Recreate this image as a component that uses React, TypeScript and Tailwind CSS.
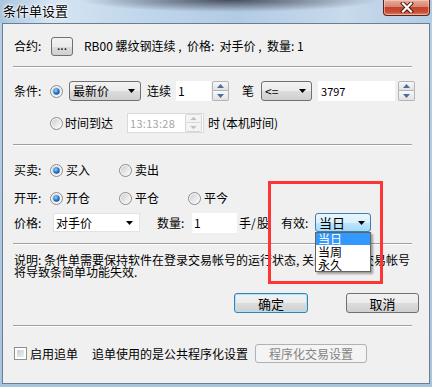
import React from "react";

const H = ({ children }: { children: React.ReactNode }) => (
  <span className="inline-block w-[6px]">{children}</span>
);

function Radio({ checked }: { checked?: boolean }) {
  return (
    <svg width="13" height="13" viewBox="0 0 13 13" className="shrink-0 block">
      <defs>
        <linearGradient id="rbg" x1="0" y1="0" x2="1" y2="1">
          <stop offset="0" stopColor="#cfcfcf" />
          <stop offset="1" stopColor="#fbfbfb" />
        </linearGradient>
        <radialGradient id="rdot" cx="0.4" cy="0.35" r="0.75">
          <stop offset="0" stopColor="#8fdcff" />
          <stop offset="0.55" stopColor="#2178c9" />
          <stop offset="1" stopColor="#0b4a88" />
        </radialGradient>
      </defs>
      <circle cx="6.5" cy="6.5" r="6" fill="#f6f6f6" stroke="#8a8a8a" />
      <circle cx="6.5" cy="6.5" r="4.5" fill="url(#rbg)" />
      {checked && <circle cx="6.5" cy="6.5" r="3.2" fill="url(#rdot)" />}
    </svg>
  );
}

function Arrow() {
  return (
    <svg width="7" height="4" viewBox="0 0 7 4" className="block shrink-0">
      <path d="M0 0h7L3.5 4z" fill="#000" />
    </svg>
  );
}

function Spin({ disabled }: { disabled?: boolean }) {
  const c = disabled ? "#c2c2c2" : "#4d6b9e";
  return (
    <div className="flex flex-col w-[17px] h-[20px] shrink-0">
      <div
        className={
          disabled
            ? "h-[10px] border border-[#d6d6d6] rounded-t-[2px] bg-[#f4f4f4] flex items-center justify-center"
            : "h-[10px] border border-[#b4b4b4] rounded-t-[2px] bg-[linear-gradient(to_bottom,#f8f8f8,#e2e2e2)] flex items-center justify-center"
        }
      >
        <svg width="7" height="4" viewBox="0 0 7 4" className="block">
          <path d="M3.5 0L7 4H0z" fill={c} />
        </svg>
      </div>
      <div
        className={
          disabled
            ? "h-[10px] border border-t-0 border-[#d6d6d6] rounded-b-[2px] bg-[#f4f4f4] flex items-center justify-center"
            : "h-[10px] border border-t-0 border-[#b4b4b4] rounded-b-[2px] bg-[linear-gradient(to_bottom,#f8f8f8,#e2e2e2)] flex items-center justify-center"
        }
      >
        <svg width="7" height="4" viewBox="0 0 7 4" className="block">
          <path d="M0 0h7L3.5 4z" fill={c} />
        </svg>
      </div>
    </div>
  );
}

function GrayCombo({ text, w }: { text: string; w: string }) {
  return (
    <div
      className={
        w +
        " h-[20px] shrink-0 rounded-[3px] border border-[#707070] bg-[linear-gradient(to_bottom,#f2f2f2_0%,#ebebeb_50%,#dddddd_51%,#cfcfcf_100%)] flex items-center pl-[3px] pr-[5px]"
      }
    >
      <span className="flex-1 leading-[12px]">{text}</span>
      <Arrow />
    </div>
  );
}

function Sep({ mt }: { mt: string }) {
  return (
    <div
      className={
        mt + " -ml-[1px] w-[399px] h-[2px] border-t border-t-[#a0a0a0] border-b border-b-white shrink-0"
      }
    />
  );
}

export default function App() {
  return (
    <div className="w-[432px] h-[387px] flex flex-col bg-[linear-gradient(to_bottom,#b8cfe6,#a9c4df)] font-['Noto_Sans_CJK_SC','Noto_Sans_CJK_JP',sans-serif] text-[12px] text-black overflow-hidden">
      {/* Title bar */}
      <div className="h-[23px] shrink-0 flex items-start bg-[radial-gradient(ellipse_150px_12px_at_230px_0px,rgba(25,25,35,0.7),rgba(25,25,35,0)),linear-gradient(to_right,#a9c5df,#d6e5f3_12%,#c3d8ec_30%,#b2cbe4_55%,#c8daec_80%,#b3cbe4)]">
        <div className="ml-[3px] mt-[4px] text-[13px] leading-[14px] text-black [text-shadow:0_0_5px_#fff,0_0_3px_#fff,0_0_2px_#fff]">
          条件单设置
        </div>
        <div className="ml-auto mr-[2px] w-[47px] h-[16px] rounded-b-[4px] border border-t-0 border-[#5e2318] bg-[linear-gradient(to_bottom,#e9ab9b,#d98470_45%,#c4432c_50%,#c74e37_80%,#e0876d)] shadow-[inset_0_0_0_1px_rgba(255,220,210,0.5)] flex items-center justify-center">
          <svg width="14" height="11" viewBox="0 0 14 11" className="block">
            <path d="M3 1.5L11 9.5M11 1.5L3 9.5" stroke="#4a1409" strokeWidth="4" strokeLinecap="square" />
            <path d="M3 1.5L11 9.5M11 1.5L3 9.5" stroke="#fff" strokeWidth="2.2" strokeLinecap="square" />
          </svg>
        </div>
      </div>

      {/* Client area */}
      <div className="mx-[2px] h-[361px] shrink-0 border border-[#6c7e91] bg-[#f0f0f0] relative flex flex-col pl-[11px]">
        {/* Row 1 */}
        <div className="mt-[12px] h-[20px] flex items-center shrink-0">
          <div className="w-[37px] shrink-0 leading-[12px]">
            合约<H>:</H>
          </div>
          <div className="w-[22px] h-[19px] shrink-0 rounded-[3px] border border-[#707070] bg-[linear-gradient(to_bottom,#f2f2f2_0%,#ebebeb_50%,#dddddd_51%,#cfcfcf_100%)] flex items-center justify-center leading-[10px] pb-[2px]">
            ...
          </div>
          <div className="ml-[11px] leading-[12px] whitespace-nowrap">
            RB00 螺纹钢连续 <H>,</H> 价格<H>:</H> 对手价 <H>,</H> 数量<H>:</H>1
          </div>
        </div>

        <Sep mt="mt-[10px]" />

        {/* Condition row */}
        <div className="mt-[13px] h-[20px] flex items-center shrink-0">
          <div className="w-[36px] shrink-0 leading-[12px]">
            条件<H>:</H>
          </div>
          <Radio checked />
          <div className="ml-[6px]">
            <GrayCombo text="最新价" w="w-[72px]" />
          </div>
          <div className="ml-[6px] leading-[12px]">连续</div>
          <div className="ml-[5px] w-[35px] h-[20px] bg-white shrink-0 flex items-center pl-[2px] leading-[12px]">1</div>
          <div className="ml-[1px]">
            <Spin />
          </div>
          <div className="ml-[13px] leading-[12px]">笔</div>
          <div className="ml-[7px]">
            <GrayCombo text="<=" w="w-[51px]" />
          </div>
          <div className="ml-[6px] w-[77px] h-[20px] bg-white shrink-0 flex items-center pl-[3px] text-[11px] leading-[12px]">3797</div>
          <div className="ml-[3px]">
            <Spin />
          </div>
        </div>

        {/* Time row */}
        <div className="mt-[12px] h-[20px] flex items-center shrink-0">
          <div className="w-[36px] shrink-0" />
          <Radio />
          <div className="ml-[2px] leading-[12px]">时间到达</div>
          <div className="ml-[14px] w-[77px] h-[20px] shrink-0 bg-white border border-[#dadada] flex items-center pl-[2px] pr-[1px]">
            <span className="flex-1 text-[#a6a6a6] text-[11px] leading-[12px] tracking-[0.3px]">13:13:28</span>
            <div className="scale-y-[0.9]">
              <Spin disabled />
            </div>
          </div>
          <div className="ml-[4px] leading-[12px]">时</div>
          <div className="ml-[2px] leading-[12px]">(本机时间)</div>
        </div>

        <Sep mt="mt-[11px]" />

        {/* Buy/Sell */}
        <div className="mt-[16px] h-[16px] flex items-center shrink-0">
          <div className="w-[36px] shrink-0 leading-[12px]">
            买卖<H>:</H>
          </div>
          <Radio checked />
          <div className="ml-[3px] w-[24px] leading-[12px]">买入</div>
          <div className="ml-[29px]">
            <Radio />
          </div>
          <div className="ml-[3px] leading-[12px]">卖出</div>
        </div>

        {/* Open/Close */}
        <div className="mt-[12px] h-[16px] flex items-center shrink-0">
          <div className="w-[36px] shrink-0 leading-[12px]">
            开平<H>:</H>
          </div>
          <Radio checked />
          <div className="ml-[3px] w-[24px] leading-[12px]">开仓</div>
          <div className="ml-[29px]">
            <Radio />
          </div>
          <div className="ml-[3px] w-[24px] leading-[12px]">平仓</div>
          <div className="ml-[29px]">
            <Radio />
          </div>
          <div className="ml-[3px] leading-[12px]">平今</div>
        </div>

        {/* Price row */}
        <div className="mt-[7px] h-[20px] flex items-start shrink-0">
          <div className="w-[39px] h-[19px] shrink-0 leading-[12px] flex items-center">
            价格<H>:</H>
          </div>
          <div className="w-[87px] h-[19px] shrink-0 bg-white border border-[#e2e3ea] flex items-center pl-[2px] pr-[6px]">
            <span className="flex-1 leading-[12px]">对手价</span>
            <Arrow />
          </div>
          <div className="ml-[17px] h-[19px] flex items-center leading-[12px]">
            数量<H>:</H>
          </div>
          <div className="ml-[5px] w-[45px] h-[20px] bg-white shrink-0 flex items-center pl-[2px] leading-[12px]">1</div>
          <div className="ml-[2px] h-[19px] flex items-center leading-[12px] whitespace-nowrap">
            手<H>/</H>股
          </div>
          <div className="ml-[12px] h-[19px] flex items-center leading-[12px] whitespace-nowrap">
            有效<H>:</H>
          </div>
          <div className="ml-[4px] w-[56px] h-[19px] shrink-0 rounded-[3px] border border-[#3c7fb1] bg-[linear-gradient(to_bottom,#eaf6fd_0%,#d9f0fc_50%,#bee6fd_51%,#a7d9f5_100%)] flex items-center pl-[3px] pr-[5px]">
            <span className="flex-1 text-[13px] leading-[13px]">当日</span>
            <Arrow />
          </div>
        </div>

        <Sep mt="mt-[10px]" />

        {/* Description */}
        <div className="mt-[9px] h-[24px] shrink-0 leading-[12px] whitespace-nowrap">
          <div>
            说明<H>:</H>条件单需要保持软件在登录交易帐号的运行状态<H>,</H>关闭程序或交易帐号
          </div>
          <div>
            将导致条简单功能失效<H>.</H>
          </div>
        </div>

        {/* Buttons */}
        <div className="mt-[15px] h-[20px] flex items-center shrink-0">
          <div className="ml-[220px] w-[74px] h-[20px] shrink-0 rounded-[3px] border border-[#3c7fb1] shadow-[inset_0_0_0_1px_#a8e4fb] bg-[linear-gradient(to_bottom,#f2f2f2_0%,#ebebeb_50%,#dddddd_51%,#cfcfcf_100%)] flex items-center justify-center text-[13px] leading-[13px]">
            确定
          </div>
          <div className="ml-[38px] w-[73px] h-[20px] shrink-0 rounded-[3px] border border-[#707070] bg-[linear-gradient(to_bottom,#f2f2f2_0%,#ebebeb_50%,#dddddd_51%,#cfcfcf_100%)] flex items-center justify-center text-[13px] leading-[13px]">
            取消
          </div>
        </div>

        <Sep mt="mt-[12px]" />

        {/* Bottom row */}
        <div className="mt-[17px] h-[19px] flex items-center shrink-0">
          <div className="w-[13px] h-[13px] shrink-0 border border-[#8e8f8f] bg-white p-[2px]">
            <div className="w-full h-full bg-[linear-gradient(135deg,#c8ccd2,#eef0f2)]" />
          </div>
          <div className="ml-[3px] w-[48px] leading-[12px] text-[12px]">启用追单</div>
          <div className="ml-[14px] leading-[12px] whitespace-nowrap">追单使用的是公共程序化设置</div>
          <div className="ml-[7px] w-[112px] h-[19px] shrink-0 rounded-[3px] border border-[#adb2b5] bg-[#f4f4f4] flex items-center justify-center text-[#838383] leading-[12px]">
            程序化交易设置
          </div>
        </div>

        {/* Dropdown list overlay */}
        <div className="absolute left-[312px] top-[208px] w-[56px] h-[40px] bg-white border border-[#646464] shadow-[2px_2px_2px_rgba(0,0,0,0.35)] flex flex-col text-[12px] leading-[12px] z-10">
          <div className="h-[12px] bg-[#3399ff] text-white pl-[2px] flex items-center">当日</div>
          <div className="h-[13px] pl-[2px] flex items-center">当周</div>
          <div className="h-[13px] pl-[2px] flex items-center">永久</div>
        </div>

        {/* Red highlight rectangle */}
        <div className="absolute left-[265px] top-[157px] w-[115px] h-[103px] border-[3px] border-[#ff3434] z-20 pointer-events-none" />
      </div>
    </div>
  );
}
